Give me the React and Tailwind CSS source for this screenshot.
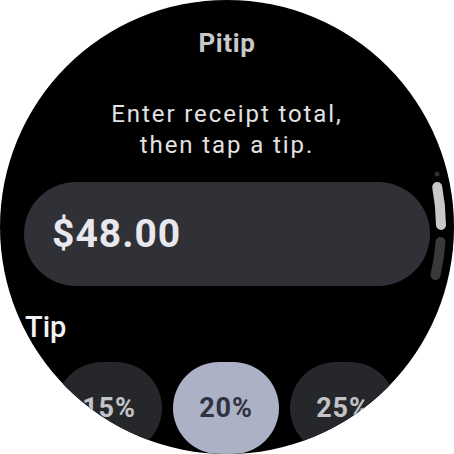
import React from 'react';

const tips = [
    { id: 15, label: '15%' },
    { id: 20, label: '20%' },
    { id: 25, label: '25%' }
];

// Curved scroll indicator that hugs the right edge of the round screen
const ScrollIndicator = () => (
    <svg className="absolute inset-0 pointer-events-none" width="454" height="454" viewBox="0 0 454 454">
        <circle cx="437" cy="174" r="2.5" fill="#2e302e" />
        <path d="M437.2 187 A214 214 0 0 1 441 225" stroke="#c8c8c8" strokeWidth="10" strokeLinecap="round" fill="none" />
        <path d="M440.5 242 A214 214 0 0 1 435.5 275" stroke="#383a37" strokeWidth="10" strokeLinecap="round" fill="none" />
    </svg>
);

const App = () => {
    const selected = 20;

    return (
        <div className="w-[454px] h-[454px] bg-white" style={{ fontFamily: 'Roboto, "Noto Sans", sans-serif' }}>
            <div className="relative w-full h-full rounded-full bg-black overflow-hidden">
                <div className="flex flex-col">
                    {/* Title */}
                    <h1 className="mt-[28px] h-[30px] text-center text-[26px] leading-[30px] font-bold text-[#c9c9c9] tracking-[0.6px]">
                        Pitip
                    </h1>

                    {/* Hint */}
                    <p className="mt-[41px] text-center text-[24px] leading-[31px] text-[#e2e2e2] tracking-[1.9px]">
                        Enter receipt total,
                        <br />
                        then tap a tip.
                    </p>

                    {/* Amount field */}
                    <div className="mt-[21px] ml-[24px] w-[406px] h-[104px] rounded-full bg-[#303136] flex items-center pl-[28px]">
                        <span className="text-[39px] font-bold text-[#e8e8ee] tracking-[1px]">$48.00</span>
                    </div>

                    {/* Tip label */}
                    <div className="mt-[24px] ml-[25px] h-[34px] text-[29px] leading-[34px] font-medium text-[#f2f2f2]">
                        Tip
                    </div>

                    {/* Tip choices */}
                    <div className="mt-[18px] ml-[56px] flex gap-[11px]">
                        {tips.map((tip) => (
                            <button
                                key={tip.id}
                                className={`w-[106px] h-[92px] shrink-0 rounded-full flex items-center justify-center text-[27px] font-bold tracking-[0.8px] ${
                                    tip.id === selected
                                        ? 'bg-[#adb1c5] text-[#2f3240]'
                                        : 'bg-[#26272b] text-[#c3c3c8]'
                                }`}
                            >
                                {tip.label}
                            </button>
                        ))}
                    </div>
                </div>

                <ScrollIndicator />
            </div>
        </div>
    );
};

export default App;
